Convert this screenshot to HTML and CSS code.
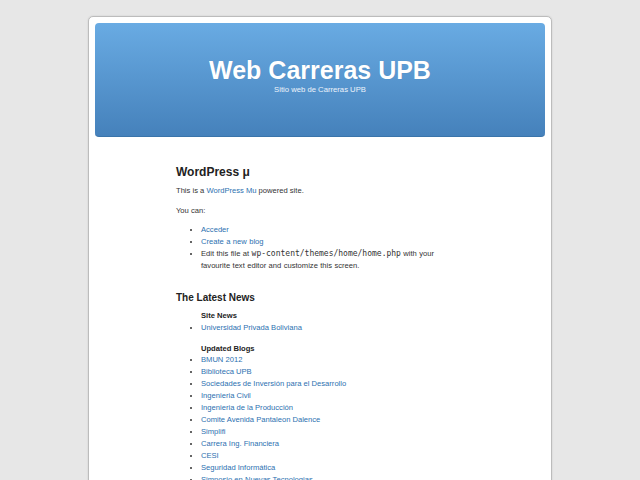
FILE: index.html
```html
<!DOCTYPE html>
<html lang="es">
<head>
<meta charset="utf-8">
<title>Web Carreras UPB</title>
<link rel="stylesheet" href="styles.css">
</head>
<body>
<div class="page">
  <header class="header">
    <h1 class="site-title">Web Carreras UPB</h1>
    <div class="site-desc">Sitio web de Carreras UPB</div>
  </header>
  <main class="content">
    <h2 class="title">WordPress μ</h2>
    <p>This is a <a href="#">WordPress Mu</a> powered site.</p>
    <p>You can:</p>
    <ul class="list intro-list">
      <li><a href="#">Acceder</a></li>
      <li><a href="#">Create a new blog</a></li>
      <li>Edit this file at <code>wp-content/themes/home/home.php</code> with your favourite text editor and customize this screen.</li>
    </ul>
    <h3 class="subtitle">The Latest News</h3>
    <div class="news">
      <div class="news-head">Site News</div>
      <ul class="list nested">
        <li><a href="#">Universidad Privada Boliviana</a></li>
      </ul>
      <div class="news-head gap">Updated Blogs</div>
      <ul class="list nested blogs">
        <li><a href="#">BMUN 2012</a></li>
        <li><a href="#">Biblioteca UPB</a></li>
        <li><a href="#">Sociedades de Inversión para el Desarrollo</a></li>
        <li><a href="#">Ingenieria Civil</a></li>
        <li><a href="#">Ingenieria de la Producción</a></li>
        <li><a href="#">Comite Avenida Pantaleon Dalence</a></li>
        <li><a href="#">Simplifi</a></li>
        <li><a href="#">Carrera Ing. Financiera</a></li>
        <li><a href="#">CESI</a></li>
        <li><a href="#">Seguridad Informática</a></li>
        <li><a href="#">Simposio en Nuevas Tecnologias</a></li>
        <li><a href="#">Ingenieria Comercial</a></li>
      </ul>
    </div>
  </main>
</div>
</body>
</html>
```

FILE: styles.css
```css
html, body {
  margin: 0;
  padding: 0;
}
body {
  background: #e7e7e7;
  font-family: "Liberation Sans", Arial, sans-serif;
  font-size: 7.6px;
  line-height: 12px;
  color: #333;
}
.page {
  width: 450px;
  margin: 16px auto 0;
  padding: 6px 6px 40px;
  background: #fff;
  border: 1px solid #bcbcbc;
  border-radius: 5px;
  box-shadow: 0 0 2px rgba(0, 0, 0, 0.12);
}
.header {
  height: 114px;
  box-sizing: border-box;
  padding-top: 35px;
  border-radius: 4px;
  background: linear-gradient(#69abe3, #4581bb);
  border-bottom: 1px solid #3a74aa;
  text-align: center;
  color: #fff;
}
.site-title {
  margin: 0;
  font-size: 25px;
  line-height: 25px;
  font-weight: bold;
  text-shadow: 0 0 1px rgba(0, 0, 0, 0.15);
}
.site-desc {
  margin-top: 2px;
  font-size: 7.7px;
  line-height: 10px;
  color: #eef4fb;
}
.content {
  width: 275px;
  margin-left: 81px;
  padding-top: 28px;
}
.title {
  margin: 0 0 6px;
  font-size: 12px;
  line-height: 14px;
  color: #222;
}
p {
  margin: 0 0 8px;
}
a {
  color: #2c70b0;
  text-decoration: none;
}
.list {
  margin: 0;
  padding-left: 25px;
  list-style: disc;
}
.intro-list {
  margin-top: -1px;
  word-spacing: 0.3px;
}
code {
  font-family: "DejaVu Sans Mono", "Liberation Mono", monospace;
  font-size: 8px;
  word-spacing: 0;
  color: #333;
}
.subtitle {
  margin: 20px 0 6px;
  font-size: 10px;
  line-height: 12px;
  color: #222;
}
.news {
  padding-left: 25px;
}
.news .nested {
  padding-left: 0;
}
.news-head {
  font-weight: bold;
  color: #222;
}
.news-head.gap {
  margin-top: 9px;
}
.blogs {
  margin-top: -1px;
}
```
